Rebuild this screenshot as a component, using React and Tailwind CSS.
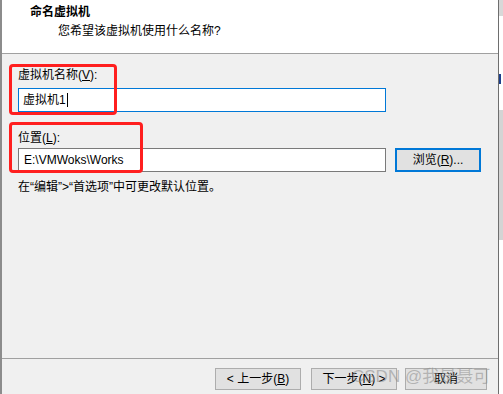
export default function App() {
  const font = { fontFamily: '"Liberation Sans", "Noto Sans CJK SC", sans-serif' };
  const q = (c) => <span style={{ fontFamily: '"Liberation Sans", sans-serif' }}>{c}</span>;
  return (
    <div className="relative w-[503px] h-[394px] overflow-hidden bg-[#f0f0f0] flex text-[12px] text-black" style={font}>
      <div className="w-[2px] h-full bg-[#8c8c8c] shrink-0" />
      <div className="w-[496px] h-full flex flex-col shrink-0">
        <div className="h-[54px] bg-white border-b border-[#a0a0a0] shrink-0 pt-[4px]">
          <div className="pl-[28px] font-bold leading-[16px] h-[16px]">命名虚拟机</div>
          <div className="pl-[56px] mt-[3px] leading-[16px] h-[16px]">您希望该虚拟机使用什么名称?</div>
        </div>
        <div className="flex-1 pl-[16px] pt-[13px]">
          <div className="leading-[16px] h-[16px]">虚拟机名称(<span className="underline">V</span>):</div>
          <div className="mt-[5px] w-[368px] h-[24px] bg-white border border-[#0078d7] flex items-center pl-[4px]">
            <span className="leading-[16px]">虚拟机1</span>
            <span className="w-[1px] h-[14px] bg-black ml-[1px]" />
          </div>
          <div className="mt-[18px] leading-[16px] h-[16px]">位置(<span className="underline">L</span>):</div>
          <div className="mt-[2px] flex items-center gap-[9px]">
            <div className="w-[368px] h-[24px] bg-white border border-[#7a7a7a] flex items-center pl-[5px]">
              <span className="leading-[16px]">E:\VMWoks\Works</span>
            </div>
            <div className="w-[86px] h-[24px] bg-[#e1e1e1] border-2 border-[#0078d7] flex items-center justify-center">
              <span className="leading-[16px]">浏览(<span className="underline">R</span>)...</span>
            </div>
          </div>
          <div className="mt-[7px] leading-[16px] h-[16px]">
            在{q("“")}编辑{q("”")}&gt;{q("“")}首选项{q("”")}中可更改默认位置。
          </div>
        </div>
        <div className="h-[36px] border-t border-[#a0a0a0] shrink-0 pt-[9px] flex pl-[213px]">
          <div className="w-[86px] h-[22px] bg-[#e1e1e1] border border-[#adadad] flex items-center justify-center">
            <span className="leading-[16px]">&lt; 上一步(<span className="underline">B</span>)</span>
          </div>
          <div className="ml-[10px] w-[86px] h-[22px] bg-[#e1e1e1] border border-[#adadad] flex items-center justify-center">
            <span className="leading-[16px]">下一步(<span className="underline">N</span>) &gt;</span>
          </div>
          <div className="ml-[8px] w-[82px] h-[22px] bg-[#e1e1e1] border border-[#adadad] flex items-center justify-center">
            <span className="leading-[16px]">取消</span>
          </div>
        </div>
      </div>
      <div className="w-[1px] h-full bg-[#6e6e6e] shrink-0" />
      <div className="flex-1 h-full bg-white flex flex-col">
        <div className="h-[16px] bg-[#d8d8d8]" />
        <div className="h-[58px]" />
        <div className="h-[10px] bg-[#1c3f8c] w-[2px]" />
        <div className="h-[26px]" />
        <div className="h-[130px] bg-[#d4d4d4]" />
        <div className="flex-1" />
      </div>

      <div className="absolute left-[9px] top-[64px] w-[108px] h-[51px] border-[3px] border-[#ff1f1f] rounded-[4px]" />
      <div className="absolute left-[9px] top-[122px] w-[134px] h-[51px] border-[3px] border-[#ff1f1f] rounded-[4px]" />
      <div
        className="absolute left-[352px] top-[366px] text-[17px] leading-[22px] text-[rgba(140,140,140,0.55)]"
        style={{ fontFamily: '"Liberation Sans", "Noto Sans CJK SC", sans-serif' }}
      >
        CSDN @我是聂可
      </div>
    </div>
  );
}
